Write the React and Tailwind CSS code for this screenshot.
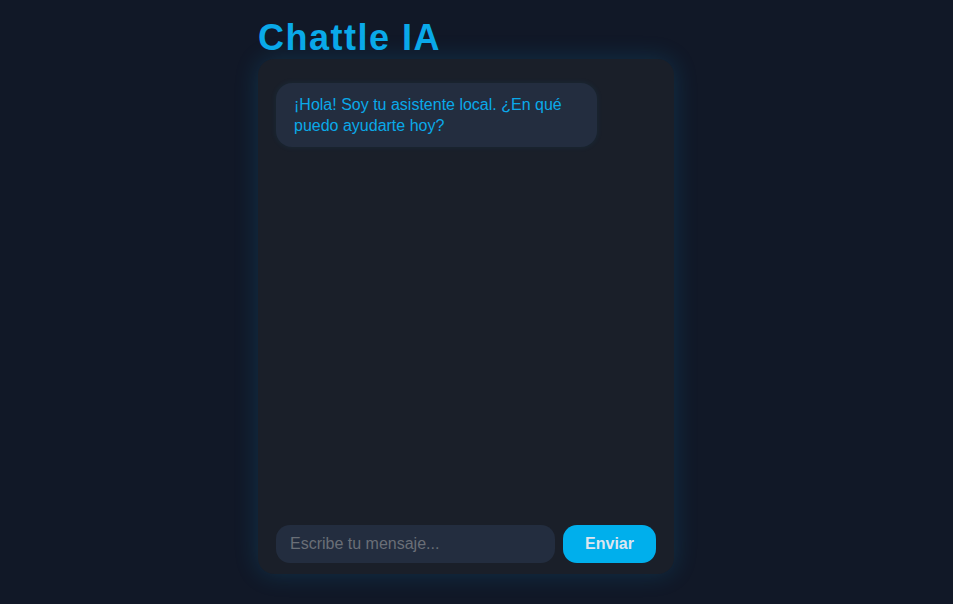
export default function App() {
  return (
    <div className="min-h-screen w-full bg-[#111827] flex justify-center" style={{ fontFamily: '"Liberation Sans", Arial, sans-serif' }}>
      <div className="w-[416px] ml-[-21px] pt-[18px] flex flex-col">
        <h1 className="text-[36px] leading-[40px] font-bold tracking-[1.5px] text-[#0aa9e9] mb-[1px]">Chattle IA</h1>
        <div className="h-[515px] rounded-[16px] bg-[#1a1f29] shadow-[0_0_24px_rgba(14,165,233,0.18)] px-[18px] pt-[24px] pb-[11px] flex flex-col">
          <div className="flex-1">
            <div className="w-[321px] rounded-[16px] bg-[#232d3f] px-[18px] py-[11px] text-[16px] leading-[21px] text-[#0aa9e9] shadow-[0_0_6px_rgba(14,165,233,0.08)]">
              ¡Hola! Soy tu asistente local. ¿En qué puedo ayudarte hoy?
            </div>
          </div>
          <div className="flex gap-[8px]">
            <input
              className="flex-1 h-[38px] rounded-[14px] bg-[#232d3f] px-[14px] text-[16px] text-gray-200 placeholder:text-[#6a6f77] outline-none"
              placeholder="Escribe tu mensaje..."
            />
            <button className="w-[93px] h-[38px] rounded-[14px] bg-[#00afec] text-[16px] font-bold text-[#dde6f0]">Enviar</button>
          </div>
        </div>
      </div>
    </div>
  );
}
